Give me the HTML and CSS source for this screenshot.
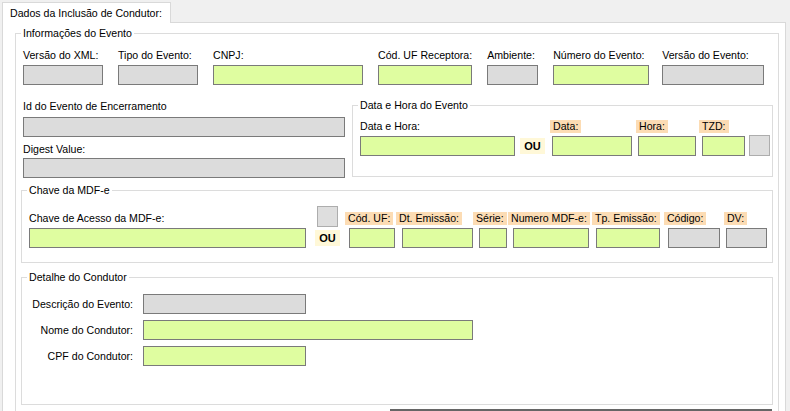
FILE: index.html
```html
<!DOCTYPE html>
<html lang="pt-BR">
<head>
    <meta charset="UTF-8">
    <title>Inclusão de Condutor</title>
    <link rel="stylesheet" href="styles.css">
</head>
<body>
    <!-- aba -->
    <div class="tabstrip">
        <div class="tab">Dados da Inclusão de Condutor:</div>
    </div>

    <div class="tab-page">
        <fieldset class="group group-main">
            <legend>Informações do Evento</legend>
            <div class="group-body main-body">

                <div class="row-info">
                    <div class="col"><label>Versão do XML:</label><input class="field off w-xml"></div>
                    <div class="col"><label>Tipo do Evento:</label><input class="field off w-tipo"></div>
                    <div class="col"><label>CNPJ:</label><input class="field w-cnpj"></div>
                    <div class="col"><label>Cód. UF Receptora:</label><input class="field w-uf"></div>
                    <div class="col"><label>Ambiente:</label><input class="field off w-amb"></div>
                    <div class="col"><label>Número do Evento:</label><input class="field w-num"></div>
                    <div class="col col-versao"><label>Versão do Evento:</label><input class="field off w-ver"></div>
                </div>

                <div class="row-ids">
                    <div class="col col-ids">
                        <label class="lbl-id">Id do Evento de Encerramento</label>
                        <input class="field off">
                        <label class="lbl-digest">Digest Value:</label>
                        <input class="field off">
                    </div>

                    <fieldset class="group group-data">
                        <legend>Data e Hora do Evento</legend>
                        <div class="group-body data-body">
                            <div class="col c-dh"><label>Data e Hora:</label><input class="field"></div>
                            <div class="ou">OU</div>
                            <div class="col tagcol c-data"><span class="tag">Data:</span><input class="field"></div>
                            <div class="col tagcol c-hora"><span class="tag">Hora:</span><input class="field"></div>
                            <div class="col tagcol c-tzd"><span class="tag">TZD:</span><input class="field"></div>
                            <button class="btn-sq btn-tzd"></button>
                        </div>
                    </fieldset>
                </div>

                <fieldset class="group group-chave">
                    <legend>Chave da MDF-e</legend>
                    <div class="group-body chave-body">
                        <div class="col c-chave"><label>Chave de Acesso da MDF-e:</label><input class="field"></div>
                        <div class="ou-col">
                            <button class="btn-sq"></button>
                            <div class="ou">OU</div>
                        </div>
                        <div class="col tagcol c-uf"><span class="tag">Cód. UF:</span><input class="field"></div>
                        <div class="col tagcol c-dt"><span class="tag">Dt. Emissão:</span><input class="field"></div>
                        <div class="col tagcol c-serie"><span class="tag">Série:</span><input class="field"></div>
                        <div class="col tagcol c-nmdf"><span class="tag">Numero MDF-e:</span><input class="field"></div>
                        <div class="col tagcol c-tp"><span class="tag">Tp. Emissão:</span><input class="field"></div>
                        <div class="col tagcol c-cod"><span class="tag">Código:</span><input class="field off"></div>
                        <div class="col tagcol c-dv"><span class="tag">DV:</span><input class="field off"></div>
                    </div>
                </fieldset>

                <fieldset class="group group-cond">
                    <legend>Detalhe do Condutor</legend>
                    <div class="group-body cond-grid">
                        <label>Descrição do Evento:</label><input class="field off w-desc">
                        <label>Nome do Condutor:</label><input class="field w-nome">
                        <label>CPF do Condutor:</label><input class="field w-cpf">
                    </div>
                </fieldset>

                <div class="grid-top"></div>
            </div>
        </fieldset>
    </div>
</body>
</html>
```

FILE: styles.css
```css
* {
    margin: 0;
    padding: 0;
    box-sizing: border-box;
}

html, body {
    height: 100%;
    overflow: hidden;
}

body {
    background: #f0f0f0;
    font-family: "Liberation Sans", Arial, sans-serif;
    font-size: 10.6px;
    color: #000;
}

/* aba */
.tabstrip {
    display: flex;
    height: 22px;
    padding: 2px 0 0 2px;
}

.tab {
    position: relative;
    z-index: 1;
    width: 169px;
    height: 21px;
    padding: 4px 0 0 7px;
    line-height: 13px;
    white-space: nowrap;
    background: #fff;
    border: 1px solid #d9d9d9;
    border-bottom: none;
}

.tab-page {
    margin-left: 2px;
    width: 784px;
    height: 389px;
    padding: 4px 0 0 12px;
    background: #fff;
    border: 1px solid #d9d9d9;
    border-bottom: none;
}

/* group box */
.group {
    border: 1px solid #dcdcdc;
    min-width: 0;
}

.group legend {
    margin-left: 5px;
    padding: 0 2px;
    line-height: 13px;
    white-space: nowrap;
}

.group-main {
    width: 764px;
}

.main-body {
    padding: 9px 0 0 5px;
}

.col {
    display: flex;
    flex-direction: column;
    align-items: flex-start;
}

label {
    line-height: 13px;
    margin-bottom: 3px;
    white-space: nowrap;
}

.field {
    display: block;
    height: 20px;
    border: 1px solid #7a7a7a;
    background: #dffda0;
    font: inherit;
    outline: none;
}

.field.off {
    background: #dcdcdc;
}

.btn-sq {
    display: block;
    width: 21px;
    height: 21px;
    background: #dedede;
    border: 1px solid #adadad;
}

.tag {
    line-height: 13px;
    padding: 0 3px;
    margin-bottom: 3px;
    background: #fcdcb4;
    white-space: nowrap;
}

.ou {
    width: 25px;
    height: 16px;
    line-height: 16px;
    text-align: center;
    font-weight: bold;
    font-size: 11px;
    background: #fff8d8;
}

/* linha 1 */
.row-info {
    display: flex;
    gap: 15px;
    margin-left: 2px;
}

.w-xml, .w-tipo { width: 80px; }
.w-cnpj { width: 150px; }
.w-uf { width: 94px; }
.w-amb { width: 51px; }
.w-num { width: 96px; }
.w-ver { width: 102px; }
.col-versao { margin-left: -2px; }

/* linha 2 */
.row-ids {
    display: flex;
    align-items: flex-start;
    margin: 14px 0 0 2px;
}

.col-ids {
    width: 322px;
}

.col-ids .field {
    width: 322px;
}

.lbl-id {
    padding-top: 1px;
    margin-bottom: 4px;
}

.lbl-digest {
    margin: 6px 0 2px;
}

.group-data {
    margin-left: 7px;
    width: 421px;
}

.data-body {
    display: flex;
    align-items: flex-end;
    padding: 8px 0 20px 7px;
}

.c-dh .field { width: 155px; }
.data-body .ou { margin: 0 0 2px 5px; }
.c-data { margin-left: 5px; }
.c-data .field { margin-left: 2px; width: 80px; }
.c-hora { margin-left: 4px; }
.c-hora .field { margin-left: 2px; width: 58px; }
.c-tzd { margin-left: 3px; }
.c-tzd .field { margin-left: 3px; width: 43px; }
.btn-tzd { margin-left: 4px; }

/* chave */
.group-chave {
    margin-top: 6px;
    width: 752px;
}

.chave-body {
    display: flex;
    align-items: flex-end;
    padding: 9px 0 14px 7px;
}

.c-chave .field { width: 277px; }

.ou-col {
    display: flex;
    flex-direction: column;
    align-items: center;
    width: 25px;
    margin-left: 9px;
}

.ou-col .ou { margin: 3px 0 2px; }

.c-uf { margin-left: 5px; }
.c-uf .field { margin-left: 4px; width: 46px; }
.c-dt { margin-left: 1px; }
.c-dt .field { margin-left: 6px; width: 71px; }
.c-serie .field { margin-left: 6px; width: 28px; }
.c-nmdf { margin-left: 1px; }
.c-nmdf .field { margin-left: 5px; width: 76px; }
.c-tp { margin-left: 2px; }
.c-tp .field { margin-left: 4px; width: 64px; }
.c-cod { margin-left: 4px; }
.c-cod .field { margin-left: 4px; width: 52px; }
.c-dv { margin-left: 4px; }
.c-dv .field { margin-left: 2px; width: 41px; }

/* condutor */
.group-cond {
    margin-top: 8px;
    width: 752px;
}

.cond-grid {
    display: grid;
    grid-template-columns: 104px auto;
    column-gap: 10px;
    row-gap: 6px;
    justify-items: start;
    padding: 10px 0 38px 7px;
}

.cond-grid label {
    justify-self: end;
    line-height: 20px;
    margin: 0;
}

.w-desc, .w-cpf { width: 163px; }
.w-nome { width: 330px; }

.grid-top {
    margin: 4px 0 0 369px;
    width: 382px;
    height: 2px;
    background: #666;
}
```
